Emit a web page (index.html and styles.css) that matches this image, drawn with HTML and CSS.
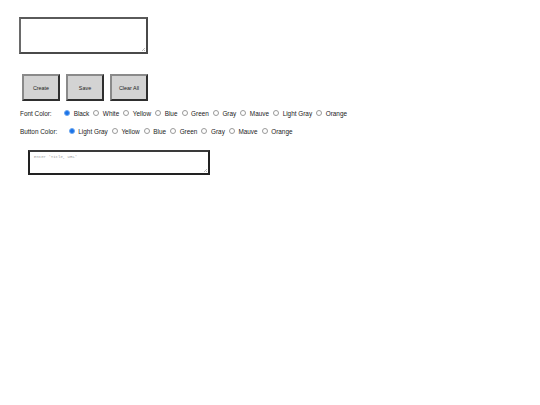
FILE: index.html
```html
<!DOCTYPE html>
<html lang="en">
<head>
    <meta charset="UTF-8">
    <title>Bookmarks</title>
    <link rel="stylesheet" href="styles.css">
</head>
<body>

    <textarea class="note" id="note"></textarea>

    <div class="buttons">
        <button type="button">Create</button>
        <button type="button">Save</button>
        <button type="button">Clear All</button>
    </div>

    <div class="option-row first-row">
        <span class="option-label font-label">Font Color:</span>
        <label><input type="radio" name="font" checked>Black</label>
        <label><input type="radio" name="font">White</label>
        <label><input type="radio" name="font">Yellow</label>
        <label><input type="radio" name="font">Blue</label>
        <label><input type="radio" name="font">Green</label>
        <label><input type="radio" name="font">Gray</label>
        <label><input type="radio" name="font">Mauve</label>
        <label><input type="radio" name="font">Light Gray</label>
        <label><input type="radio" name="font">Orange</label>
    </div>

    <div class="option-row">
        <span class="option-label button-label">Button Color:</span>
        <label><input type="radio" name="btn" checked>Light Gray</label>
        <label><input type="radio" name="btn">Yellow</label>
        <label><input type="radio" name="btn">Blue</label>
        <label><input type="radio" name="btn">Green</label>
        <label><input type="radio" name="btn">Gray</label>
        <label><input type="radio" name="btn">Mauve</label>
        <label><input type="radio" name="btn">Orange</label>
    </div>

    <textarea class="links" placeholder="Enter 'Title, URL'"></textarea>

</body>
</html>
```

FILE: styles.css
```css
body {
    margin: 0;
    padding: 17px 0 0 19px;
    font-family: "Liberation Sans", Arial, sans-serif;
    font-size: 6.4px;
    color: #222;
    background-color: #fff;
}
textarea {
    display: block;
    box-sizing: border-box;
    resize: none;
    margin: 0;
    background: #fff;
    /* small resize grip in the corner */
    background-image: linear-gradient(135deg, transparent 60%, #bbb 60%, #bbb 70%, transparent 70%, transparent 80%, #bbb 80%, #bbb 90%, transparent 90%);
    background-size: 4px 4px;
    background-position: right 1px bottom 1px;
    background-repeat: no-repeat;
}
.note {
    width: 129px;
    height: 37px;
    border: 2px solid #4a4a4a;
    border-top-color: #5a5a5a;
    border-left-color: #6a6a6a;
}
.buttons {
    display: flex;
    gap: 6px;
    margin: 20px 0 0 3px;
}
button {
    box-sizing: border-box;
    width: 38px;
    height: 27px;
    padding: 0;
    font-family: "Liberation Sans", Arial, sans-serif;
    font-size: 5.4px;
    color: #222;
    background-color: #d3d3d3;
    border: 2px solid #2e2e2e;
    border-top-color: #8a8a8a;
    border-left-color: #8a8a8a;
}
.option-row {
    display: flex;
    align-items: center;
    height: 18px;
    margin-left: 1px;
}
.first-row {
    margin-top: 3px;
}
.option-row label {
    display: flex;
    align-items: center;
    margin-right: 0.6px;
}
.option-label.font-label {
    margin-right: 9px;
}
.option-label.button-label {
    margin-right: 8px;
}
input[type="radio"] {
    appearance: none;
    box-sizing: border-box;
    width: 6px;
    height: 6px;
    margin: 0 3.5px 0 3.5px;
    border: 0.7px solid #9a9a9a;
    border-radius: 50%;
    background: #fff;
}
input[type="radio"]:checked {
    border: 1px solid #6ea8f0;
    background: #1a73e8;
}
.links {
    width: 182px;
    height: 25px;
    margin: 10px 0 0 9px;
    padding: 3px 4px;
    border: 2px solid #222;
    border-top-color: #3a3a3a;
    font-family: "Liberation Mono", monospace;
    font-size: 4px;
}
.links::placeholder {
    color: #999;
}
```
